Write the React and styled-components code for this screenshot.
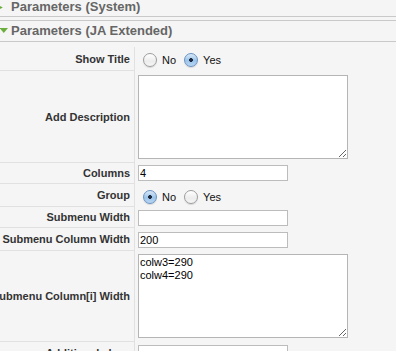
import React from "react";
import styled, { createGlobalStyle } from "styled-components";

const GlobalStyle = createGlobalStyle`
  html, body {
    margin: 0;
    padding: 0;
    background: #f5f5f5;
    overflow: hidden;
  }
  body {
    font-family: "Liberation Sans", Arial, sans-serif;
  }
`;

const Page = styled.div`
  width: 396px;
  height: 351px;
  overflow: hidden;
  background: #f5f5f5;
`;

const PanelHeader = styled.div`
  display: flex;
  align-items: flex-start;
  height: ${(p) => (p.$first ? "16px" : "20px")};
  line-height: ${(p) => (p.$first ? "13px" : "20px")};
  margin-top: ${(p) => (p.$first ? "0" : "3px")};
  border-top: ${(p) => (p.$first ? "none" : "1px solid #c9c9c9")};
  border-bottom: 1px solid #c9c9c9;
  font-size: 13px;
  font-weight: bold;
  color: #666666;
  white-space: nowrap;
`;

const Arrow = styled.svg`
  flex: none;
  width: 11px;
  height: 16px;
  overflow: visible;
`;

const Table = styled.div`
  margin-top: 5px;
  display: grid;
  grid-template-columns: 135px 1fr;
`;

const Label = styled.div`
  box-sizing: border-box;
  display: flex;
  align-items: center;
  justify-content: flex-end;
  padding-right: 4px;
  border-right: 1px solid #e1e1e1;
  border-bottom: 1px solid #e1e1e1;
  overflow: hidden;
  white-space: nowrap;
  font-size: 11px;
  font-weight: bold;
  color: #333333;
`;

const Value = styled.div`
  display: flex;
  align-items: center;
  padding: ${(p) => p.$pt ?? 3}px 3px ${(p) => p.$pb ?? 2}px 3px;
  border-bottom: 1px solid transparent;
  min-height: ${(p) => p.$h || 0}px;
  box-sizing: border-box;
`;

const RadioGroup = styled.div`
  display: flex;
  align-items: center;
  padding-top: 3px;
`;

const Option = styled.label`
  display: flex;
  align-items: center;
  font-size: 11px;
  color: #111111;
`;

const RadioDot = styled.span`
  box-sizing: border-box;
  width: 14px;
  height: 14px;
  margin: 0 5px;
  border-radius: 50%;
  border: 1px solid ${(p) => (p.$on ? "#6a93c2" : "#9c9c9c")};
  background: ${(p) =>
    p.$on
      ? "radial-gradient(circle at 50% 50%, #1e2a40 0 1.6px, transparent 2.2px), linear-gradient(#d8e8f8, #9cc4ea 55%, #b9d6f3)"
      : "linear-gradient(#ffffff, #ececec 60%, #f6f6f6)"};
  box-shadow: 0 1px 1px rgba(0, 0, 0, 0.12);
`;

const OptionText = styled.span`
  margin-right: 3px;
`;

const TextInput = styled.input`
  box-sizing: border-box;
  width: 150px;
  height: 16px;
  margin: 0;
  padding: 0 1px;
  border: 1px solid #bcbcbc;
  background: #ffffff;
  font-family: "Liberation Sans", Arial, sans-serif;
  font-size: 11px;
  color: #000000;
  outline: none;
`;

const TextArea = styled.textarea`
  box-sizing: border-box;
  display: block;
  width: 210px;
  height: 84px;
  margin: 0;
  padding: 1px 1px;
  border: 1px solid #b5b5b5;
  background: #ffffff;
  font-family: "Liberation Sans", Arial, sans-serif;
  font-size: 11px;
  line-height: 13px;
  color: #000000;
  outline: none;
`;

function Radios({ value }) {
  return (
    <RadioGroup>
      <Option>
        <RadioDot $on={value === "no"} />
        <OptionText>No</OptionText>
      </Option>
      <Option>
        <RadioDot $on={value === "yes"} />
        <OptionText>Yes</OptionText>
      </Option>
    </RadioGroup>
  );
}

export default function App() {
  return (
    <Page>
      <GlobalStyle />
      <PanelHeader $first>
        <Arrow viewBox="0 0 11 16">
          <polygon points="-3,4.5 2.8,7.5 -3,10.5" fill="#6cae3e" />
        </Arrow>
        Parameters (System)
      </PanelHeader>
      <PanelHeader>
        <Arrow viewBox="0 0 11 16">
          <polygon points="-0.5,7 8,7 3.8,12" fill="#6cae3e" />
        </Arrow>
        Parameters (JA Extended)
      </PanelHeader>
      <Table>
        <Label>Show Title</Label>
        <Value $pt={0} $pb={0} $h={24}>
          <Radios value="yes" />
        </Value>

        <Label>Add Description</Label>
        <Value $pt={4} $pb={3}>
          <TextArea defaultValue="" />
        </Value>

        <Label>Columns</Label>
        <Value $pt={2} $pb={2}>
          <TextInput defaultValue="4" />
        </Value>

        <Label>Group</Label>
        <Value $pt={0} $pb={0} $h={23}>
          <Radios value="no" />
        </Value>

        <Label>Submenu Width</Label>
        <Value $pt={3} $pb={1}>
          <TextInput defaultValue="" />
        </Value>

        <Label>Submenu Column Width</Label>
        <Value $pt={4} $pb={2}>
          <TextInput defaultValue="200" />
        </Value>

        <Label>Submenu Column[i] Width</Label>
        <Value $pt={3} $pb={3}>
          <TextArea defaultValue={"colw3=290\ncolw4=290"} />
        </Value>

        <Label>Additional class</Label>
        <Value $pt={3} $pb={2}>
          <TextInput defaultValue="" />
        </Value>
      </Table>
    </Page>
  );
}
